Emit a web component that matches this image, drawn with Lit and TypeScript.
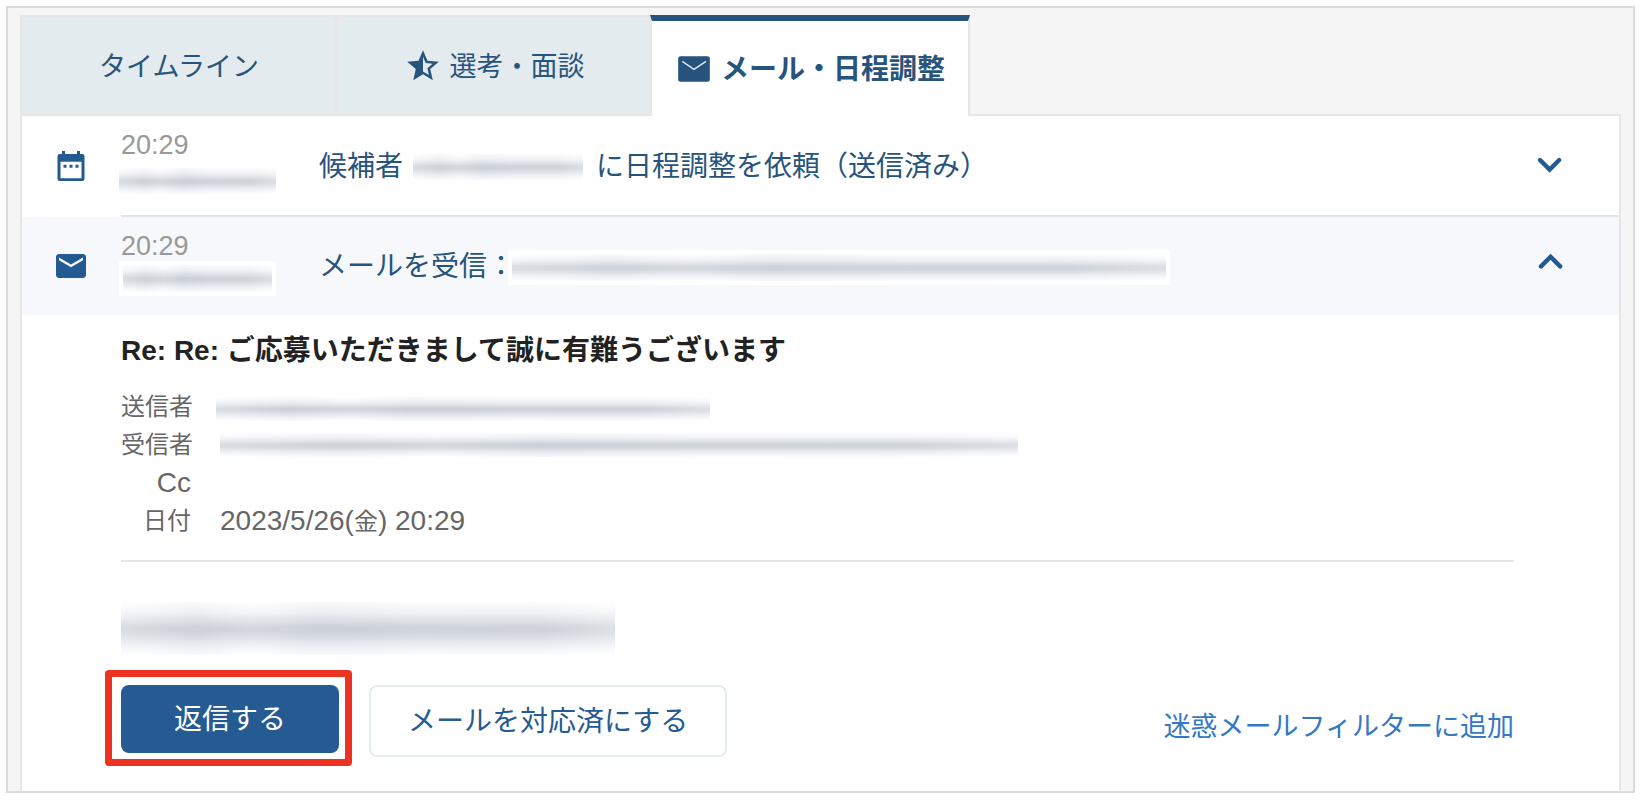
import { LitElement, html, svg, css } from "lit";
import { customElement, property, state } from "lit/decorators.js";
import { classMap } from "lit/directives/class-map.js";

type IconName = "star" | "mail-thin" | "mail" | "calendar" | "down" | "up";

const shapes = {
  star: svg`<path fill="currentColor" d="M22 9.24l-7.19-.62L12 2 9.19 8.63 2 9.24l5.46 4.73L5.82 21 12 17.27 18.18 21l-1.63-7.03L22 9.24zM12 15.4V6.1l1.71 4.04 4.38.38-3.32 2.88 1 4.28L12 15.4z"/>`,
  "mail-thin": svg`<rect x="2" y="4" width="20" height="16" rx="1.6" fill="currentColor"/><path d="M4.600 7.200L12 12.200 19.600 7.200" fill="none" stroke="#dfe8f0" stroke-width="0.9"/>`,
  mail: svg`<path fill="currentColor" d="M20 4H4c-1.100 0-2 .9-2 2v12c0 1.100.9 2 2 2h16c1.100 0 2-.9 2-2V6c0-1.100-.9-2-2-2zm0 4.200l-8 4.700-8-4.700V6.300l8 4.700 8-4.700v1.900z"/>`,
  calendar: svg`<path fill="currentColor" fill-rule="evenodd" d="M6 2h2v2h8V2h2v2h1.500A1.500 1.500 0 0 1 21 5.500v15a1.500 1.500 0 0 1-1.500 1.500h-15A1.500 1.500 0 0 1 3 20.500v-15A1.500 1.500 0 0 1 4.500 4H6zM5 9.200V20.200h14V9.200z"/><path fill="currentColor" d="M7 11.200h2v2H7zM11 11.200h2v2h-2zM15 11.200h2v2h-2z"/>`,
  down: svg`<path d="M6.800 8.900l5 5 5-5" fill="none" stroke="currentColor" stroke-width="2.300" stroke-linecap="round"/>`,
  up: svg`<path d="M7.300 12.200l5-5 5 5" fill="none" stroke="currentColor" stroke-width="2.300" stroke-linecap="round"/>`,
};

@customElement("app-icon")
class AppIcon extends LitElement {
  @property() name: IconName = "mail";
  @property({ type: Number }) size = 36;

  static styles = css`
    :host {
      display: inline-flex;
      flex: none;
    }
  `;

  render() {
    return html`<svg width=${this.size} height=${this.size} viewBox="0 0 24 24" aria-hidden="true">${shapes[this.name]}</svg>`;
  }
}

@customElement("app-root")
class AppRoot extends LitElement {
  @state() private current = 2;

  private tabs: { label: string; icon?: IconName }[] = [
    { label: "タイムライン" },
    { label: "選考・面談", icon: "star" },
    { label: "メール・日程調整", icon: "mail-thin" },
  ];

  static styles = css`
    :host {
      box-sizing: border-box;
      min-height: 100vh;
      padding: 6px 9px 10px 6px;
      display: flex;
      background: #fff;
      color: #27547d;
      font-family: "Liberation Sans", "Noto Sans CJK JP", sans-serif;
      font-size: 27px;
      line-height: 38px;
    }
    * {
      box-sizing: border-box;
    }
    button {
      font: inherit;
      color: inherit;
      cursor: pointer;
      margin: 0;
    }
    .frame {
      flex: 1;
      min-width: 0;
      display: flex;
      flex-direction: column;
      padding: 7px 12px 0;
      border: 2px solid #dbdbdb;
      background: #f5f5f5;
    }
    .tabs {
      display: flex;
      height: 101px;
      margin-bottom: -2px;
    }
    .tab {
      display: flex;
      align-items: center;
      justify-content: center;
      gap: 8px;
      width: 318px;
      padding: 0;
      border: 2px solid #e6e6e6;
      background: #e3ebee;
    }
    .tab span {
      padding-top: 3px;
    }
    .tab + .tab {
      margin-left: -3px;
    }
    .tab.active {
      z-index: 1;
      width: 320px;
      border-top: 6px solid #27547d;
      border-bottom: 0;
      background: #fff;
      font-size: 28px;
      font-weight: 700;
    }
    .panel {
      flex: 1;
      border: 2px solid #e6e6e6;
      border-bottom: 0;
      background: #fff;
    }
    .row {
      display: grid;
      grid-template-columns: 99px 198px 1fr 46px;
      align-items: center;
      height: 99px;
      padding-right: 46px;
    }
    .row.open {
      height: 98px;
      background: #f6f8fb;
    }
    .separator {
      height: 2px;
      margin-left: 99px;
      background: #e3e4e5;
    }
    .kind {
      padding-left: 31px;
      color: #245a92;
      display: flex;
    }
    .when {
      display: flex;
      flex-direction: column;
      align-self: start;
      padding-top: 10px;
      color: #999;
    }
    .who {
      width: 157px;
      height: 26px;
      margin: 4px 0 0 -2px;
    }
    .open .who {
      height: 35px;
      margin-top: -4px;
    }
    .subject {
      display: flex;
      align-items: center;
      padding-top: 2px;
      font-size: 28px;
    }
    .name {
      width: 170px;
      height: 26px;
      margin: 0 13px 0 10px;
    }
    .address {
      flex: 0 1 662px;
      height: 35px;
      margin-left: -7px;
    }
    .toggle {
      display: flex;
      padding: 0;
      border: 0;
      background: none;
      color: #245a92;
    }
    .blur {
      display: block;
      background: linear-gradient(
          90deg,
          rgba(255, 255, 255, 0.2),
          rgba(160, 170, 180, 0.06) 15%,
          rgba(255, 255, 255, 0.08) 27%,
          rgba(150, 172, 190, 0.08) 40%,
          rgba(190, 200, 220, 0.05) 60%,
          rgba(170, 180, 190, 0.04) 85%,
          rgba(255, 255, 255, 0.25)
        ),
        linear-gradient(#fff, #f3f4f6 20%, #d0d4da 48%, #d2d6dd 58%, #f3f4f8 85%, #fff);
    }
    .boxed {
      border: 4px solid #fff;
    }
    .mail {
      padding: 17px 105px 34px 99px;
    }
    h2 {
      margin: 0 0 18px;
      color: #222;
      font-size: 28px;
      line-height: 38px;
    }
    dl {
      display: grid;
      grid-template-columns: 70px 1fr;
      grid-auto-rows: 38px;
      align-items: center;
      column-gap: 29px;
      margin: 0;
      padding-bottom: 20px;
      border-bottom: 2px solid #e6e6e6;
      color: #666;
      font-size: 24px;
    }
    dt {
      text-align: right;
      white-space: nowrap;
    }
    dd {
      margin: 0;
    }
    .latin {
      font-size: 28px;
    }
    .sender {
      width: 494px;
      height: 24px;
      margin: 4px 0 0 -4px;
    }
    .receiver {
      width: 798px;
      height: 24px;
    }
    .message {
      width: 494px;
      height: 53px;
      margin: 40px 0 30px;
    }
    .actions {
      display: flex;
      align-items: flex-start;
      font-size: 28px;
    }
    .highlight {
      position: relative;
      margin-right: 30px;
    }
    .highlight::after {
      content: "";
      position: absolute;
      inset: -15px -13px -13px -16px;
      border: 7px solid #ec3323;
      border-radius: 4px;
      pointer-events: none;
    }
    .reply {
      display: block;
      height: 68px;
      padding: 2px 53px 0;
      border: 0;
      border-radius: 8px;
      background: #255a93;
      color: #fff;
    }
    .done {
      height: 72px;
      padding: 2px 37px 0;
      border: 2px solid #e5ecf0;
      border-radius: 8px;
      background: #fff;
      color: #255a93;
    }
    .filter {
      align-self: center;
      margin-left: auto;
      padding-top: 12px;
      color: #3578c4;
      font-size: 27px;
      text-decoration: none;
    }
  `;

  render() {
    return html`
      <main class="frame" lang="ja">
        <div class="tabs" role="tablist">
          ${this.tabs.map(
            (tab, i) => html`<button
              role="tab"
              aria-selected=${i === this.current}
              class=${classMap({ tab: true, active: i === this.current })}
              @click=${() => (this.current = i)}
            >
              ${tab.icon ? html`<app-icon name=${tab.icon} size="38"></app-icon>` : ""}<span>${tab.label}</span>
            </button>`
          )}
        </div>
        <section class="panel" role="tabpanel">
          <div class="row">
            <span class="kind"><app-icon name="calendar"></app-icon></span>
            <div class="when"><time>20:29</time><span class="blur who"></span></div>
            <div class="subject">候補者<span class="blur name"></span>に日程調整を依頼（送信済み）</div>
            <button class="toggle" aria-label="開く" aria-expanded="false"><app-icon name="down" size="46"></app-icon></button>
          </div>
          <div class="separator"></div>
          <div class="row open">
            <span class="kind"><app-icon name="mail"></app-icon></span>
            <div class="when"><time>20:29</time><span class="blur boxed who"></span></div>
            <div class="subject">メールを受信：<span class="blur boxed address"></span></div>
            <button class="toggle" aria-label="閉じる" aria-expanded="true"><app-icon name="up" size="46"></app-icon></button>
          </div>
          <article class="mail">
            <h2>Re: Re: ご応募いただきまして誠に有難うございます</h2>
            <dl>
              <dt>送信者</dt>
              <dd><span class="blur sender"></span></dd>
              <dt>受信者</dt>
              <dd><span class="blur receiver"></span></dd>
              <dt><span class="latin">Cc</span></dt>
              <dd></dd>
              <dt>日付</dt>
              <dd><span class="latin">2023/5/26(</span>金<span class="latin">) 20:29</span></dd>
            </dl>
            <span class="blur message"></span>
            <div class="actions">
              <div class="highlight"><button class="reply">返信する</button></div>
              <button class="done">メールを対応済にする</button>
              <a class="filter" href="#filter">迷惑メールフィルターに追加</a>
            </div>
          </article>
        </section>
      </main>
    `;
  }
}
